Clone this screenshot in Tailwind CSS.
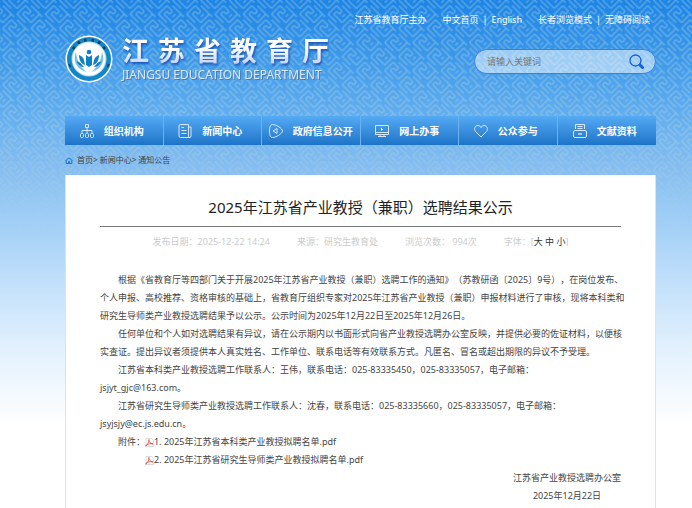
<!DOCTYPE html>
<html lang="zh-CN">
<head>
  <meta charset="UTF-8" />
  <meta name="viewport" content="width=device-width, initial-scale=1.0" />
  <title>2025年江苏省产业教授（兼职）选聘结果公示</title>
  <script src="https://cdn.jsdelivr.net/npm/@tailwindcss/browser@4"></script>
</head>
<body class="relative isolate flex min-h-screen flex-col bg-white bg-[linear-gradient(#1b84e6_0px,#3d9aeb_60px,#62aef0_115px,#84bdf1_165px,#a0cef6_220px,#c0dffa_280px,#e3f1fd_350px,#ffffff_425px)] bg-no-repeat pr-9 pl-[65px] font-['Noto_Sans','Noto_Sans_CJK_SC',sans-serif] text-[9px] leading-[18px] text-[#444] [text-spacing-trim:space-all]">
  <!-- fret pattern behind the header -->
  <svg class="absolute inset-x-0 top-0 -z-10 h-60 w-full" aria-hidden="true">
    <defs>
      <pattern id="fret" width="20" height="20" patternUnits="userSpaceOnUse" patternTransform="rotate(-45)">
        <path d="M2 14V2H14V10H10V6H6V18H18V6M10 14H14M18 2V0M18 20V18" fill="none" stroke="#b5d3dc" stroke-width="1" />
      </pattern>
      <linearGradient id="fade" x1="0" y1="0" x2="0" y2="1">
        <stop offset="0" stop-color="#fff" stop-opacity=".6" />
        <stop offset=".6" stop-color="#fff" stop-opacity=".6" />
        <stop offset="1" stop-color="#fff" stop-opacity="0" />
      </linearGradient>
      <mask id="fadeMask"><rect width="100%" height="100%" fill="url(#fade)" /></mask>
    </defs>
    <rect width="100%" height="100%" fill="url(#fret)" mask="url(#fadeMask)" />
  </svg>

  <header>
    <div class="flex justify-end gap-4 pt-[11px] pr-[6px] text-white">
      <a href="#">江苏省教育厅主办</a>
      <div class="flex gap-1"><a href="#">中文首页</a><span>|</span><a href="#">English</a></div>
      <div class="flex gap-1"><a href="#">长者浏览模式</a><span>|</span><a href="#">无障碍阅读</a></div>
    </div>

    <div class="flex items-end justify-between pt-[6px]">
      <a href="#" class="flex items-center gap-[9px]">
        <svg class="size-12" viewBox="0 0 48 48" aria-label="江苏省教育厅">
          <circle cx="24" cy="24" r="23.5" fill="#fff" />
          <circle cx="24" cy="24" r="22" fill="#1286c8" />
          <path d="M8 14l2-2M13 8.500l2-1.500M19 5.500l2.500-.5M26.500 5l2.500.5M33 7l2 1.500M38 12l2 2" stroke="#123c5c" stroke-width="3" />
          <path d="M4 29l1.500 3M44 29l-1.500 3" stroke="#123c5c" stroke-width="1.500" />
          <circle cx="24" cy="24" r="17.500" fill="#a9d8ef" />
          <circle cx="24" cy="24" r="16.500" fill="#fff" />
          <path d="M11 17c-4 10 2 18 11 20-6-4-10-10-11-20zM37 17c4 10-2 18-11 20 6-4 10-10 11-20z" fill="#7cc0e4" />
          <circle cx="24" cy="17" r="2.300" fill="#0d80c6" />
          <path d="M24 22l-3-2v10l3 2 3-2V20zM20 30c-4-1-6-5-6-10 2 1 4 2 5 5zM28 30c4-1 6-5 6-10-2 1-4 2-5 5zM19 32c-3 0-6-2-7.500-5.500 3 0 5 2 7.500 5.500zM29 32c3 0 6-2 7.500-5.500-3 0-5 2-7.500 5.500z" fill="#0d80c6" />
        </svg>
        <div>
          <h1 class="flex gap-[9px] text-[27px] leading-8 font-bold drop-shadow-[1px_2px_1px_#1c54b4]">
            <span class="bg-linear-to-b from-white from-40% to-[#b9ccf8] bg-clip-text text-transparent">江</span><span class="bg-linear-to-b from-white from-40% to-[#b9ccf8] bg-clip-text text-transparent">苏</span><span class="bg-linear-to-b from-white from-40% to-[#b9ccf8] bg-clip-text text-transparent">省</span><span class="bg-linear-to-b from-white from-40% to-[#b9ccf8] bg-clip-text text-transparent">教</span><span class="bg-linear-to-b from-white from-40% to-[#b9ccf8] bg-clip-text text-transparent">育</span><span class="bg-linear-to-b from-white from-40% to-[#b9ccf8] bg-clip-text text-transparent">厅</span>
          </h1>
          <p class="text-[12px] leading-4 whitespace-nowrap text-[#d8e8fb] drop-shadow-[1px_1px_0px_#4c7cae]">JIANGSU EDUCATION DEPARTMENT</p>
        </div>
      </a>
      <form class="mb-[9px] flex h-[25px] w-[182px] items-center rounded-full border border-[#3c7ce0] bg-white/50 pr-[11px] pl-3">
        <input type="text" aria-label="请输入关键词" placeholder="请输入关键词" class="min-w-0 flex-1 bg-transparent outline-none placeholder:text-[#777]" />
        <button type="submit" aria-label="搜索">
          <svg class="size-[15px]" viewBox="0 0 15 15" fill="none" stroke="#1260d8">
            <circle cx="6.500" cy="6.500" r="5.500" stroke-width="1.300" />
            <path d="M10 10l1.500 1.500" stroke-width="1.500" />
            <path d="M11 11l2.500 2.500" stroke-width="3" stroke-linecap="round" />
          </svg>
        </button>
      </form>
    </div>
  </header>

  <nav class="mt-[33px] grid h-[29px] grid-cols-6 divide-x divide-[#6cb2ef] bg-linear-to-b from-[#55aaf4] to-[#1c74c8] text-[10px] font-bold whitespace-nowrap text-white">
    <a href="#" class="flex items-center justify-center gap-[10px] pr-1">
      <svg class="size-[14px]" viewBox="0 0 14 14" fill="none" stroke="#e4f2ff" stroke-width=".9"><path d="M5.500.5h3v3h-3zM7 3.500V9M2 9V6.500h10V9" /><rect x=".5" y="9.500" width="3" height="4" rx="1" /><rect x="5.500" y="9.500" width="3" height="4" rx="1" /><rect x="10.500" y="9.500" width="3" height="4" rx="1" /></svg>
      组织机构
    </a>
    <a href="#" class="flex items-center justify-center gap-[10px] pr-1">
      <svg class="size-[14px]" viewBox="0 0 14 14" fill="none" stroke="#e4f2ff" stroke-width=".9"><path d="M2.500.5h8v11.500q0 1.500 1.300 1.500H2.500q-1.500 0-1.500-1.500V2q0-1.500 1.500-1.500zM10.500 3H13v9q0 1.500-1.200 1.500M3.500 3.500H6M3.500 6.500h5M3.500 9.500h5" /></svg>
      新闻中心
    </a>
    <a href="#" class="flex items-center justify-center gap-[10px]">
      <svg class="size-[14px]" viewBox="0 0 14 14" fill="none" stroke="#e4f2ff" stroke-width=".9" stroke-linejoin="round"><path d="M3.500.5C7 .5 13.500 4.500 13.500 7S7 13.500 3.500 13.500C1 13.500.5 10 .5 7S1 .5 3.500.5z" /><path d="M4 7l4-2.500v5z" /></svg>
      政府信息公开
    </a>
    <a href="#" class="flex items-center justify-center gap-[10px] pr-1">
      <svg class="size-[14px]" viewBox="0 0 14 14" fill="none" stroke="#e4f2ff" stroke-width=".9"><path d="M.5 1.500h13v9H.5zM.5 8.500h13M5 10.500v2M9 10.500v2M3 12.500h8" /><path d="M6 3.500v3.500l2-1.500z" fill="#fff" stroke="none" /></svg>
      网上办事
    </a>
    <a href="#" class="flex items-center justify-center gap-[10px] pr-1">
      <svg class="size-[14px]" viewBox="0 0 14 14" fill="none" stroke="#e4f2ff" stroke-width=".9"><path d="M7 13L1.500 7.500C-.5 5 1 1.500 4 1.500c1.500 0 2.500 1 3 2 .5-1 1.500-2 3-2 3 0 4.500 3.500 2.500 6z" /></svg>
      公众参与
    </a>
    <a href="#" class="flex items-center justify-center gap-[10px] pr-1">
      <svg class="size-[14px]" viewBox="0 0 14 14" fill="none" stroke="#e4f2ff" stroke-width=".9"><path d="M2.500 5V.5h9V5M4.500 2.500h5M4.500 4.500h5" /><rect x=".5" y="6.500" width="13" height="7" rx="1.500" /><path d="M5 10h4" stroke-width="1.300" /></svg>
      文献资料
    </a>
  </nav>

  <div class="flex items-center gap-1 pt-[6px] pb-[6px] text-[8px]">
    <svg class="h-[7px] w-2" viewBox="0 0 8 7" fill="none" stroke="#1c78dc"><path d="M.3 3.800L4 .8l3.700 3M1.500 3.500L1 6.500h6l-.5-3M3.500 6V4.500h1V6" /></svg>
    <div><a href="#">首页</a>&gt; <a href="#">新闻中心</a>&gt; <a href="#">通知公告</a></div>
  </div>

  <main class="flex-1 border-x border-[#dde3e8] bg-white px-[34px] pt-5">
    <h2 class="border-b border-[#777] pb-[7px] text-center text-[15px] leading-6 text-[#222]">2025年江苏省产业教授（兼职）选聘结果公示</h2>
    <div class="flex justify-center gap-[27px] pt-[6px] whitespace-nowrap text-[#ccc]">
      <span>发布日期：2025-12-22 14:24</span>
      <span>来源：研究生教育处</span>
      <span>浏览次数： 994次</span>
      <span>字体：[<button type="button" class="text-[#333]">大</button> <button type="button" class="text-[#333]">中</button> <button type="button" class="text-[#333]">小</button>]</span>
    </div>

    <article class="pt-5 whitespace-nowrap">
      <p class="indent-[18px]">根据《省教育厅等四部门关于开展2025年江苏省产业教授（兼职）选聘工作的通知》（苏教研函〔2025〕9号），在岗位发布、<br />个人申报、高校推荐、资格审核的基础上，省教育厅组织专家对2025年江苏省产业教授（兼职）申报材料进行了审核，现将本科类和<br />研究生导师类产业教授选聘结果予以公示。公示时间为2025年12月22日至2025年12月26日。</p>
      <p class="indent-[18px]">任何单位和个人如对选聘结果有异议，请在公示期内以书面形式向省产业教授选聘办公室反映，并提供必要的佐证材料，以便核<br />实查证。提出异议者须提供本人真实姓名、工作单位、联系电话等有效联系方式。凡匿名、冒名或超出期限的异议不予受理。</p>
      <p class="indent-[18px]">江苏省本科类产业教授选聘工作联系人：王伟，联系电话：025-83335450，025-83335057，电子邮箱：<br />jsjyt_gjc@163.com。</p>
      <p class="indent-[18px]">江苏省研究生导师类产业教授选聘工作联系人：沈春，联系电话：025-83335660，025-83335057，电子邮箱：<br />jsyjsjy@ec.js.edu.cn。</p>
      <div class="flex pl-[18px]">
        <span>附件：</span>
        <ul>
          <li><a href="#" class="flex items-center">
            <svg class="size-[9px]" viewBox="0 0 9 9" fill="none"><path d="M1 .5h5.500l2 2v6H1z" fill="#fff" stroke="#ccc" stroke-width=".7" /><path d="M.5 8C3 6.500 4.500 3.500 4 1.500c-.8 1 .5 4 4 4.500C5.500 5 2.500 6 .5 8z" stroke="#d8322c" stroke-width=".7" /></svg>
            1. 2025年江苏省本科类产业教授拟聘名单.pdf
          </a></li>
          <li><a href="#" class="flex items-center">
            <svg class="size-[9px]" viewBox="0 0 9 9" fill="none"><path d="M1 .5h5.500l2 2v6H1z" fill="#fff" stroke="#ccc" stroke-width=".7" /><path d="M.5 8C3 6.500 4.500 3.500 4 1.500c-.8 1 .5 4 4 4.500C5.500 5 2.500 6 .5 8z" stroke="#d8322c" stroke-width=".7" /></svg>
            2. 2025年江苏省研究生导师类产业教授拟聘名单.pdf
          </a></li>
        </ul>
      </div>
      <div class="flex justify-end">
        <p class="text-center">江苏省产业教授选聘办公室<br />2025年12月22日</p>
      </div>
    </article>
  </main>
</body>
</html>
